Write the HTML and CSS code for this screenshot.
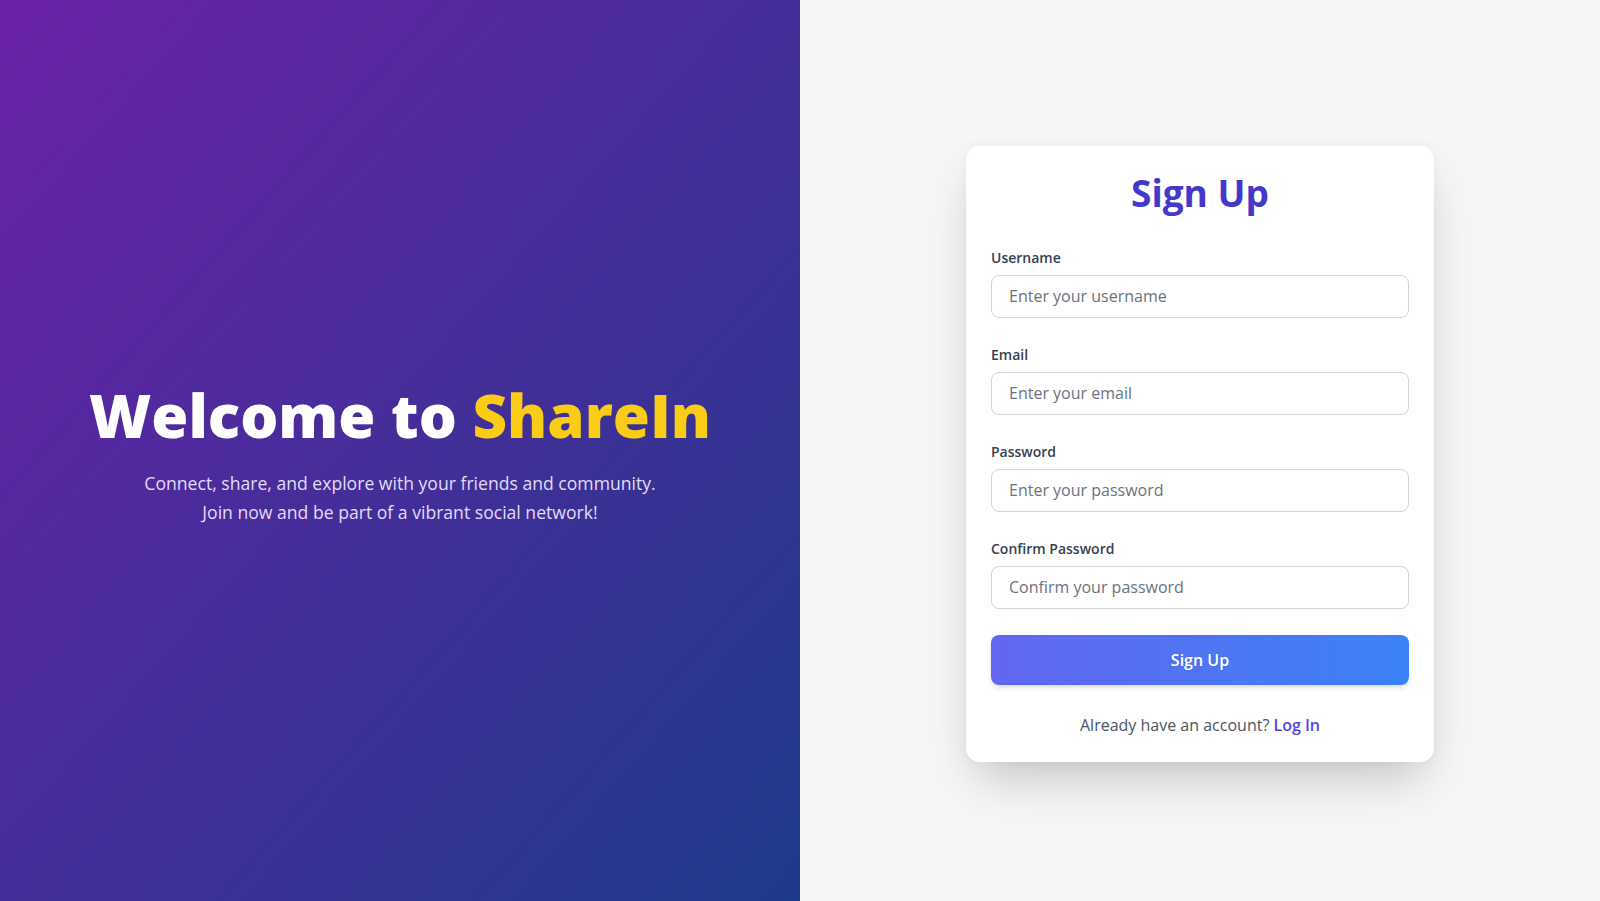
FILE: index.html
```html
<!DOCTYPE html>
<html lang="en">
<head>
<meta charset="UTF-8">
<title>ShareIn - Sign Up</title>
<link rel="stylesheet" href="styles.css">
</head>
<body>
<div class="page">
  <section class="hero">
    <div class="hero-inner">
      <h1 class="hero-title">Welcome to <span class="brand">ShareIn</span></h1>
      <p class="hero-text">Connect, share, and explore with your friends and community.<br>Join now and be part of a vibrant social network!</p>
    </div>
  </section>
  <section class="auth">
    <form class="card">
      <h2 class="card-title">Sign Up</h2>
      <div class="field">
        <label class="label" for="username">Username</label>
        <input class="input" id="username" type="text" placeholder="Enter your username">
      </div>
      <div class="field">
        <label class="label" for="email">Email</label>
        <input class="input" id="email" type="email" placeholder="Enter your email">
      </div>
      <div class="field">
        <label class="label" for="password">Password</label>
        <input class="input" id="password" type="password" placeholder="Enter your password">
      </div>
      <div class="field">
        <label class="label" for="confirm">Confirm Password</label>
        <input class="input" id="confirm" type="password" placeholder="Confirm your password">
      </div>
      <button class="btn" type="button">Sign Up</button>
      <p class="switch">Already have an account? <a class="link" href="#">Log In</a></p>
    </form>
  </section>
</div>
</body>
</html>
```

FILE: styles.css
```css
* { box-sizing: border-box; }
html, body { margin: 0; padding: 0; }
body {
  font-family: "Open Sans", "Noto Sans", sans-serif;
  background: #f5f6f8;
}
.page {
  display: flex;
  height: 901px;
}
.hero {
  width: 800px;
  flex: none;
  background: linear-gradient(to bottom right, #6b21a8, #1e3a8a);
  display: flex;
  align-items: center;
  justify-content: center;
}
.hero-inner {
  text-align: center;
  margin-top: 8px;
}
.hero-title {
  margin: 0 0 22px;
  font-size: 60px;
  line-height: 64px;
  font-weight: 800;
  color: #ffffff;
  letter-spacing: 0;
}
.brand { color: #facc15; }
.hero-text {
  margin: 0;
  font-size: 17.6px;
  line-height: 29px;
  color: #e2daf8;
}
.auth {
  flex: 1;
  display: flex;
  align-items: center;
  justify-content: center;
  background: #f5f6f8;
  padding-top: 6px;
}
.card {
  width: 468px;
  background: #ffffff;
  border-radius: 14px;
  padding: 27px 25px 25px;
  box-shadow: 0 25px 50px -12px rgba(0, 0, 0, 0.22), 0 0 12px rgba(0,0,0,0.04);
}
.card-title {
  margin: 0 0 35px;
  text-align: center;
  font-size: 37px;
  line-height: 40px;
  font-weight: 700;
  color: #4338ca;
}
.field { margin-bottom: 27px; }
.field:last-of-type { margin-bottom: 26px; }
.label {
  display: block;
  font-size: 14px;
  line-height: 20px;
  font-weight: 600;
  color: #374151;
  margin-bottom: 7px;
}
.input {
  display: block;
  width: 100%;
  height: 43px;
  border: 1px solid #d1d5db;
  border-radius: 8px;
  padding: 0 17px;
  font-family: inherit;
  font-size: 16px;
  color: #111827;
  background: #fff;
  outline: none;
}
.input::placeholder { color: #6b7280; }
.btn {
  display: block;
  width: 100%;
  height: 50px;
  border: none;
  border-radius: 8px;
  background: linear-gradient(to right, #6366f1, #3b82f6);
  color: #fff;
  font-family: inherit;
  font-size: 16px;
  font-weight: 600;
  box-shadow: 0 4px 6px -1px rgba(0,0,0,0.1), 0 2px 4px -2px rgba(0,0,0,0.1);
  cursor: pointer;
}
.switch {
  margin: 28px 0 0;
  text-align: center;
  font-size: 16px;
  line-height: 24px;
  color: #4b5563;
}
.link {
  color: #4f46e5;
  font-weight: 600;
  text-decoration: none;
}
```
